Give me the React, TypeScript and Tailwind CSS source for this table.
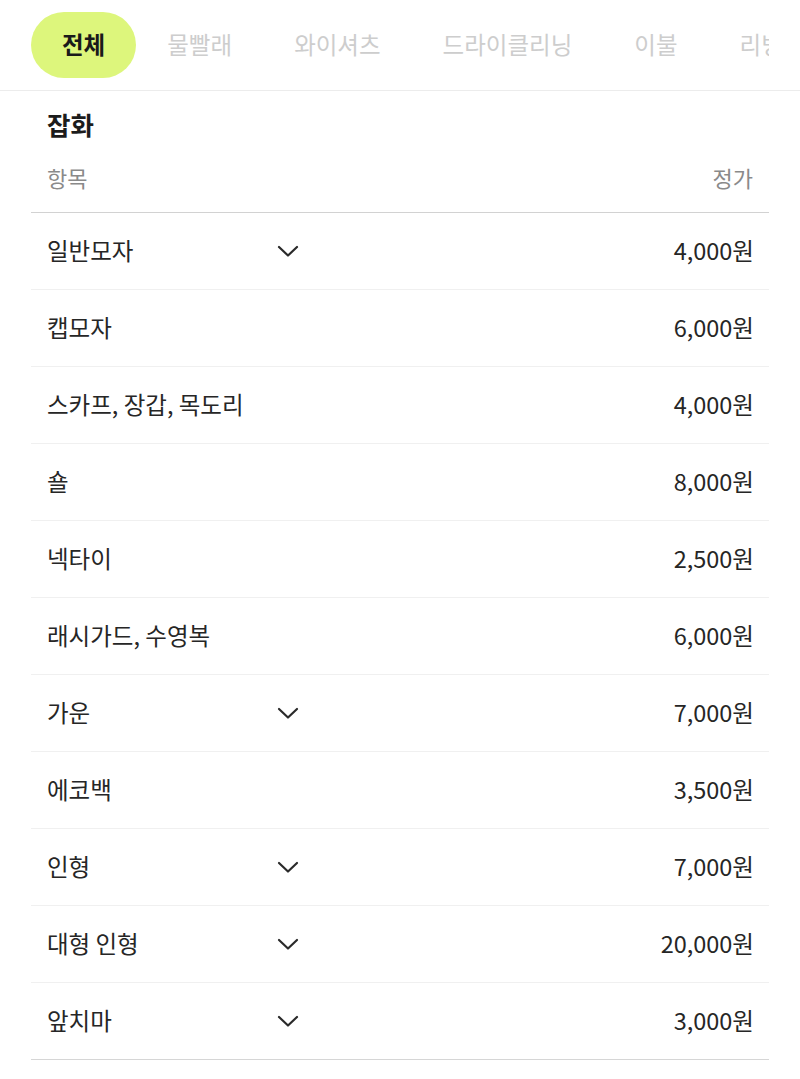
import React from 'react';

const tabs = ['전체', '물빨래', '와이셔츠', '드라이클리닝', '이불', '리빙'];

const items: { name: string; price: string; more?: boolean }[] = [
  { name: '일반모자', price: '4,000원', more: true },
  { name: '캡모자', price: '6,000원' },
  { name: '스카프, 장갑, 목도리', price: '4,000원' },
  { name: '숄', price: '8,000원' },
  { name: '넥타이', price: '2,500원' },
  { name: '래시가드, 수영복', price: '6,000원' },
  { name: '가운', price: '7,000원', more: true },
  { name: '에코백', price: '3,500원' },
  { name: '인형', price: '7,000원', more: true },
  { name: '대형 인형', price: '20,000원', more: true },
  { name: '앞치마', price: '3,000원', more: true },
];

const Chevron = () => (
  <svg width="22" height="13" viewBox="0 0 22 13" fill="none">
    <polyline points="2,2 11,10.5 20,2" stroke="#2a2a2a" strokeWidth="2.2" strokeLinecap="round" strokeLinejoin="round" />
  </svg>
);

export default function App() {
  return (
    <div className="w-[800px] h-[1079px] bg-white overflow-hidden font-['Noto_Sans_CJK_KR','Noto_Sans',sans-serif] text-[#222]">
      {/* Tabs */}
      <div className="h-[91px] border-b border-[#ececec] flex items-center pl-[31px]">
        <div className="w-[738px] flex items-center whitespace-nowrap overflow-hidden">
          {tabs.map((t, i) => (
            <div
              key={t}
              className={
                i === 0
                  ? 'shrink-0 h-[66px] px-[31px] flex items-center rounded-full bg-[#ddf67c] text-[23.5px] font-bold text-[#1a1a1a]'
                  : 'shrink-0 h-[66px] px-[31px] flex items-center text-[23.5px] text-[#cdcdcd]'
              }
            >
              {t}
            </div>
          ))}
        </div>
      </div>

      <div className="px-[31px]">
        <div className="px-4 pt-[15px] text-[25.5px] leading-[36px] font-bold text-[#1c1c1c]">잡화</div>
        <div className="flex justify-between px-4 pt-[20px] pb-[19px] text-[22px] leading-[31px] text-[#8a8a8a] border-b border-[#d2d2d2]">
          <span>항목</span>
          <span>정가</span>
        </div>

        {items.map((it, i) => (
          <div
            key={it.name}
            className={
              'h-[77px] flex items-center pl-4 pr-[15px] border-b ' +
              (i === items.length - 1 ? 'border-[#d6d6d6]' : 'border-[#f0f0f0]')
            }
          >
            <span className="w-[230px] text-[23.5px] text-[#262626]">{it.name}</span>
            <span className="w-[22px] flex items-center">{it.more && <Chevron />}</span>
            <span className="ml-auto text-[23.5px] text-[#262626]">{it.price}</span>
          </div>
        ))}
      </div>
    </div>
  );
}
